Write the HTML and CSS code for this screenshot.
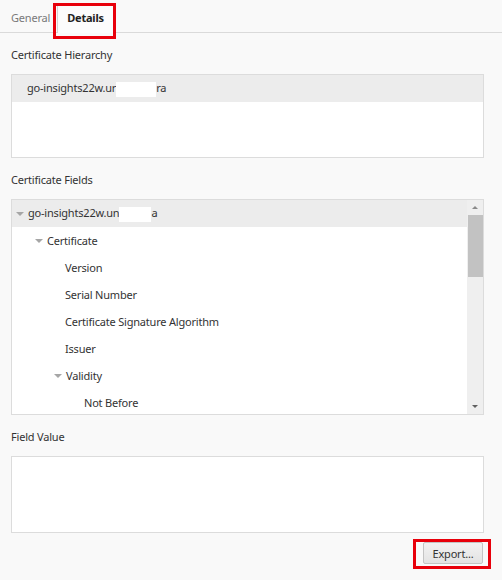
FILE: index.html
```html
<!DOCTYPE html>
<html lang="en">
<head>
    <meta charset="UTF-8">
    <title>Certificate Viewer</title>
    <link rel="stylesheet" href="styles.css">
</head>
<body>
    <div class="tabs">
        <div class="tab">General</div>
        <div class="tab active marked-tab">Details</div>
    </div>

    <div class="content">
        <div class="label">Certificate Hierarchy</div>
        <div class="box hierarchy">
            <div class="row selected level-0 no-arrow">
                <span class="text">go-insights22w.ur<span class="hidden-part"></span>ra</span>
            </div>
        </div>

        <div class="label">Certificate Fields</div>
        <div class="box fields">
            <div class="tree">
                <div class="row selected level-0"><span class="arrow"></span><span class="text">go-insights22w.un<span class="hidden-part short"></span>a</span></div>
                <div class="row level-1"><span class="arrow"></span><span class="text">Certificate</span></div>
                <div class="row level-2"><span class="text">Version</span></div>
                <div class="row level-2"><span class="text">Serial Number</span></div>
                <div class="row level-2"><span class="text">Certificate Signature Algorithm</span></div>
                <div class="row level-2"><span class="text">Issuer</span></div>
                <div class="row level-2 has-arrow"><span class="arrow"></span><span class="text">Validity</span></div>
                <div class="row level-3"><span class="text">Not Before</span></div>
            </div>
            <div class="scrollbar">
                <span class="scroll-up"></span>
                <span class="thumb"></span>
                <span class="scroll-down"></span>
            </div>
        </div>

        <div class="label">Field Value</div>
        <div class="box value"></div>

        <div class="actions">
            <button class="marked-button">Export...</button>
        </div>
    </div>
</body>
</html>
```

FILE: styles.css
```css
* {
    margin: 0;
    padding: 0;
    box-sizing: border-box;
}

body {
    background-color: #f9f9f9;
    color: #333;
    font-family: "Noto Sans", "Open Sans", sans-serif;
    font-size: 11px;
    letter-spacing: -0.2px;
    width: 502px;
    height: 580px;
    overflow: hidden;
}

/* tab strip */
.tabs {
    display: flex;
    align-items: flex-end;
    height: 33px;
    padding-left: 4px;
    border-bottom: 1px solid #dadada;
}

.tab {
    padding: 0 6px;
    height: 28px;
    line-height: 26px;
    color: #7a7a7a;
    border: 1px solid transparent;
    border-bottom: none;
}

.tab.active {
    background-color: #fcfcfc;
    border-color: #d4d4d4;
    color: #222;
    font-weight: bold;
    height: 29px;
    margin-bottom: -1px;
    padding: 0 9px;
}

.marked-tab,
.marked-button {
    position: relative;
}

.marked-tab::after {
    content: "";
    position: absolute;
    left: -5px;
    right: -3px;
    top: -2px;
    bottom: -6px;
    border: 3px solid #e8000b;
}

/* section bodies */
.content {
    padding: 0 18px 0 11px;
}

.label {
    line-height: 16px;
    margin: 14px 0 11px;
}

.box {
    background-color: #fff;
    border: 1px solid #dcdcdc;
}

.hierarchy {
    height: 84px;
}

.fields {
    height: 216px;
    display: flex;
}

.value {
    height: 77px;
}

.tree {
    flex: 1;
    overflow: hidden;
}

.row {
    display: flex;
    align-items: center;
    height: 27px;
    white-space: nowrap;
}

.row.selected {
    background-color: #ececec;
}

.level-0 { padding-left: 4px; }
.level-1 { padding-left: 23px; }
.level-2 { padding-left: 53px; }
.level-2.has-arrow { padding-left: 42px; }
.level-3 { padding-left: 72px; }

.no-arrow {
    padding-left: 15px;
}

.arrow {
    width: 0;
    height: 0;
    border-left: 4px solid transparent;
    border-right: 4px solid transparent;
    border-top: 4px solid #a6a6a6;
    margin-right: 4px;
}

.hidden-part {
    display: inline-block;
    width: 40px;
    height: 15px;
    background-color: #fff;
    vertical-align: middle;
}

.hidden-part.short {
    width: 32px;
}

/* scrollbar */
.scrollbar {
    width: 16px;
    background-color: #efefef;
    display: flex;
    flex-direction: column;
    align-items: center;
}

.scroll-up,
.scroll-down {
    width: 0;
    height: 0;
    border-left: 3px solid transparent;
    border-right: 3px solid transparent;
    margin: 6px 0;
}

.scroll-up {
    border-bottom: 3px solid #8a8a8a;
}

.scroll-down {
    border-top: 3px solid #606060;
    margin-top: auto;
}

.thumb {
    width: 15px;
    height: 62px;
    background-color: #c2c2c2;
}

/* bottom button */
.actions {
    display: flex;
    justify-content: flex-end;
    padding-top: 9px;
    padding-right: 1px;
}

button {
    width: 60px;
    height: 22px;
    font-family: inherit;
    font-size: 11px;
    letter-spacing: inherit;
    color: #333;
    background: linear-gradient(#f2f2f2, #e3e3e3);
    border: 1px solid #c4c4c4;
    border-radius: 2px;
}

.marked-button::after {
    content: "";
    position: absolute;
    left: -11px;
    right: -9px;
    top: -4px;
    bottom: -6px;
    border: 3px solid #e8000b;
}
```
